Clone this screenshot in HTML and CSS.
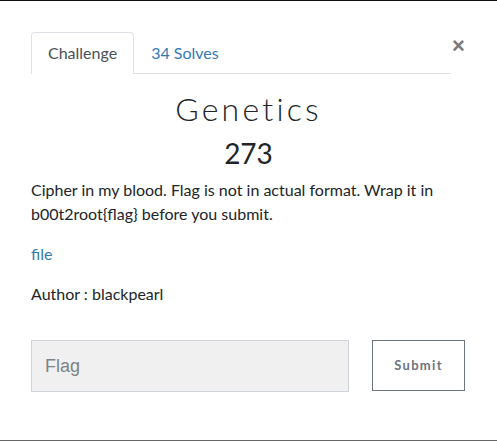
FILE: index.html
```html
<!DOCTYPE html>
<html>
<head>
<meta charset="utf-8">
<link rel="stylesheet" href="styles.css">
</head>
<body>
<div class="modal">
  <div class="header">
    <div class="tabs">
      <span class="tab active">Challenge</span>
      <span class="tab link">34 Solves</span>
    </div>
    <span class="close">&times;</span>
  </div>
  <h2 class="name">Genetics</h2>
  <h3 class="value">273</h3>
  <p class="desc">Cipher in my blood. Flag is not in actual format. Wrap it in b00t2root{flag} before you submit.</p>
  <p><a class="file" href="#">file</a></p>
  <p>Author : blackpearl</p>
  <div class="submit-row">
    <div class="input">Flag</div>
    <div class="btn">Submit</div>
  </div>
</div>
</body>
</html>
```
FILE: styles.css
```css
html, body {
  margin: 0;
  padding: 0;
  background: #fff;
}
body {
  font-family: "Lato", "Liberation Sans", sans-serif;
  font-size: 16px;
  line-height: 24px;
  color: #212529;
  border-top: 1px solid #111;
  height: 439px;
  border-bottom: 1px solid #666;
}
.modal {
  padding: 31px 31px 0 31px;
}
.header {
  display: flex;
  align-items: flex-start;
}
.tabs {
  display: flex;
  width: 420px;
  border-bottom: 1px solid #dee2e6;
}
.tab {
  padding: 8px 16px;
  border: 1px solid transparent;
  border-bottom: none;
  margin-bottom: 0;
  border-radius: 4px 4px 0 0;
}
.tab.active {
  border-color: #dee2e6;
  color: #495057;
  margin-bottom: -1px;
  padding-bottom: 9px;
  background: #fff;
}
.tab.link {
  color: #337ab7;
}
.close {
  font-family: "Liberation Sans", sans-serif;
  font-size: 22px;
  font-weight: bold;
  line-height: 20px;
  color: #7a7a7a;
  margin-left: 1px;
  margin-top: 4px;
}
.name {
  margin: 0 0 8px 0;
  padding-top: 16px;
  text-align: center;
  font-family: "Lato", sans-serif;
  font-weight: 300;
  font-size: 32px;
  line-height: 38px;
  letter-spacing: 3.2px;
}
.value {
  margin: 0 0 8px 0;
  text-align: center;
  font-weight: 400;
  font-size: 28px;
  line-height: 34px;
}
p {
  margin: 0 0 16px 0;
}
.file {
  color: #337ab7;
  text-decoration: none;
}
.submit-row {
  display: flex;
  gap: 23px;
  margin-top: 34px;
}
.input {
  width: 290px;
  height: 50px;
  border: 1px solid #ced4da;
  background: #f0f0f0;
  padding: 0 13px;
  font-family: "Liberation Sans", sans-serif;
  font-size: 18px;
  line-height: 50px;
  color: #7d8389;
}
.btn {
  width: 91px;
  height: 49px;
  border: 1px solid #6c757d;
  color: #6c757d;
  font-weight: bold;
  font-size: 13px;
  letter-spacing: 1.3px;
  line-height: 49px;
  text-align: center;
}
```
